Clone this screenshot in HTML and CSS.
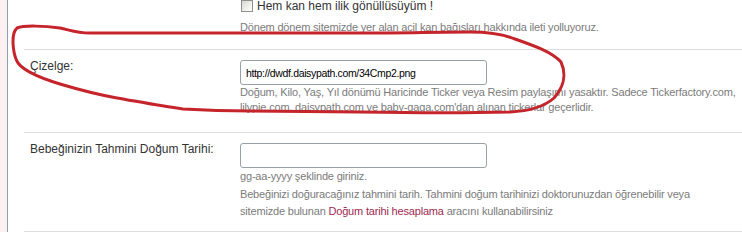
FILE: index.html
```html
<!DOCTYPE html>
<html lang="tr">
<head>
<meta charset="utf-8">
<title>Profil</title>
<link rel="stylesheet" href="styles.css">
</head>
<body>
<div class="page">
  <div class="strip"></div>
  <div class="main">
    <div class="row row-top">
      <div class="label"></div>
      <div class="field">
        <label class="check-line"><span class="checkbox"></span>Hem kan hem ilik gönüllüsüyüm !</label>
        <div class="desc">Dönem dönem sitemizde yer alan acil kan bağışları hakkında ileti yolluyoruz.</div>
      </div>
    </div>
    <div class="row">
      <div class="label">Çizelge:</div>
      <div class="field">
        <input class="input" type="text" value="http://dwdf.daisypath.com/34Cmp2.png">
        <div class="desc">Doğum, Kilo, Yaş, Yıl dönümü Haricinde Ticker veya Resim paylaşımı yasaktır. Sadece Tickerfactory.com,<br>lilypie.com, daisypath.com ve baby-gaga.com'dan alınan tickerlar geçerlidir.</div>
      </div>
    </div>
    <div class="row row-last">
      <div class="label">Bebeğinizin Tahmini Doğum Tarihi:</div>
      <div class="field">
        <input class="input" type="text" value="">
        <div class="desc desc-wide">gg-aa-yyyy şeklinde giriniz.</div>
        <div class="desc desc-wide">Bebeğinizi doğuracağınız tahmini tarih. Tahmini doğum tarihinizi doktorunuzdan öğrenebilir veya<br>sitemizde bulunan <a class="link" href="#">Doğum tarihi hesaplama</a> aracını kullanabilirsiniz</div>
      </div>
    </div>
  </div>
</div>
<svg class="annot" width="742" height="232" viewBox="0 0 742 232">
  <path d="M17 28 C24 25 45 26 60 28 C70 30 76 33 90 33 L250 33 L360 33 C400 33 440 32 470 32 C490 32 505 35 515 39 C535 46 552 52 561 62 C567 75 563 88 554 98 C545 106 530 111 510 112 C470 113 420 113 360 112 L250 111 C220 111 200 110 183 109 C160 106 140 102 117 98 C95 94 80 90 60 84 C40 78 25 72 18 63 C13 55 12 40 14 33 C15 30 16 29 17 28 Z" fill="none" stroke="#c5242b" stroke-width="3" stroke-linejoin="round"/>
</svg>
</body>
</html>
```

FILE: styles.css
```css
html, body {
  margin: 0;
  padding: 0;
  background: #ffffff;
}

body {
  font-family: "Liberation Sans", Arial, sans-serif;
  color: #333333;
  overflow: hidden;
  position: relative;
  width: 742px;
  height: 232px;
}

.page {
  display: flex;
  height: 232px;
}

.strip {
  flex: none;
  width: 7px;
  background: #fcf0f3;
  border-right: 1px solid #8b9fb3;
}

.main {
  flex: 1;
  padding-left: 16px;
}

.row {
  display: grid;
  grid-template-columns: 216px 1fr;
  border-bottom: 1px solid #dadde2;
  padding: 10px 0 17px;
}

.row-top {
  margin-top: -12px;
  padding-bottom: 14px;
}

.row-last {
  padding-bottom: 10px;
}

.label {
  font-size: 12px;
  line-height: 16px;
  padding-left: 6px;
  margin-top: -2px;
  color: #333333;
}

.check-line {
  display: flex;
  align-items: center;
  font-size: 12px;
  line-height: 16px;
  color: #333333;
  margin: 0 0 6px 1px;
}

.checkbox {
  flex: none;
  box-sizing: border-box;
  width: 12px;
  height: 12px;
  border: 1px solid #8e8f8f;
  background: linear-gradient(135deg, #d9d9d2, #ffffff);
  margin-right: 4px;
}

.input {
  display: block;
  box-sizing: border-box;
  width: 247px;
  height: 25px;
  margin: 0;
  border: 1px solid #9aa0a7;
  border-radius: 3px;
  padding: 0 5px;
  font-family: "Liberation Sans", Arial, sans-serif;
  font-size: 10.5px;
  letter-spacing: -0.35px;
  color: #000000;
  background: #ffffff;
  outline: none;
}

.desc {
  font-size: 11px;
  line-height: 15px;
  letter-spacing: -0.18px;
  color: #7b7b7b;
  white-space: nowrap;
}

.desc-wide {
  line-height: 17.5px;
}

.link {
  color: #9d2a50;
  text-decoration: none;
}

.annot {
  position: absolute;
  left: 0;
  top: 0;
  pointer-events: none;
}
```
